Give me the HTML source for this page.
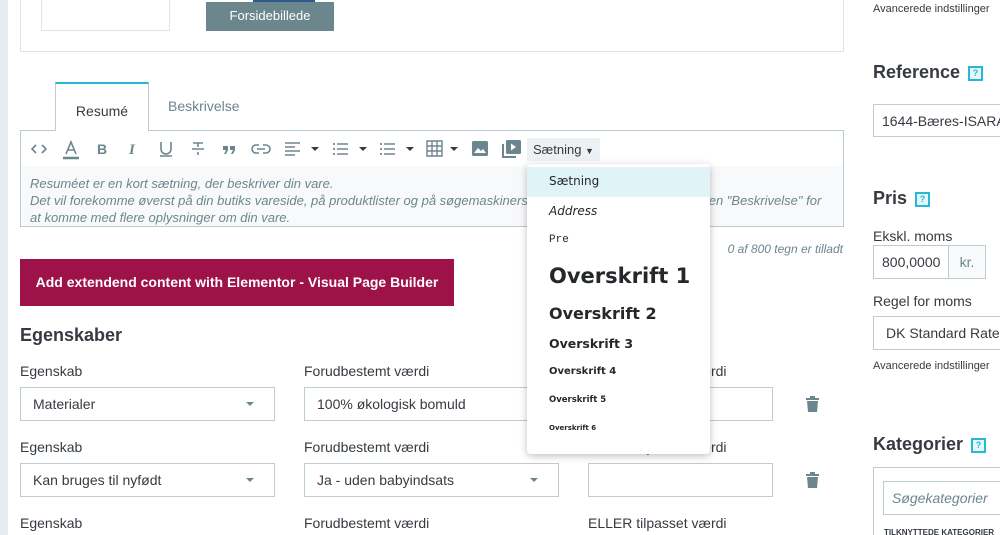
<!DOCTYPE html>
<html><head><meta charset="utf-8"><style>
*{box-sizing:border-box;margin:0;padding:0}
html,body{width:1000px;height:535px;overflow:hidden}
body{background:#fff;font-family:"Liberation Sans",sans-serif;color:#363a41;position:relative}
.a{position:absolute}
.lbl{font-size:14px;color:#363a41}
.inp{position:absolute;border:1px solid #bbcdd2;background:#fff;font-size:14px;padding-left:12px;display:flex;align-items:center;white-space:nowrap;overflow:hidden}
.caret{position:absolute;width:0;height:0;border-left:4px solid transparent;border-right:4px solid transparent;border-top:4px solid #6c868e}
.help{display:inline-block;width:15px;height:15px;border:2px solid #25b9d7;color:#25b9d7;font-size:9px;text-align:center;line-height:11px;background:#e6f7fa;vertical-align:middle;margin-left:8px;font-weight:bold}
.ic{position:absolute;top:140px}
.dd div{position:absolute;left:22px;color:#25282b;font-weight:bold}
</style></head><body>
<div class="a" style="left:0;top:0;width:8px;height:535px;background:#e9ecef"></div>
<div class="a" style="left:20px;top:-2px;width:824px;height:54px;border:1px solid #dbe6e9"></div>
<div class="a" style="left:41px;top:-2px;width:129px;height:33px;border:1px solid #dbe6e9"></div>
<div class="a" style="left:253px;top:0;width:62px;height:3px;background:#2d5a8a"></div>
<div class="a" style="left:206px;top:2px;width:128px;height:29px;background:#6c868e;color:#fff;font-size:13px;text-align:center;line-height:28px">Forsidebillede</div>
<div class="a" style="left:55px;top:82px;width:94px;height:49px;border:1px solid #bbcdd2;border-top:2px solid #25b9d7;border-bottom:none;background:#fff;z-index:2;font-size:14px;text-align:center;line-height:54px">Resumé</div>
<div class="a" style="left:168px;top:98px;font-size:14px;color:#6c868e">Beskrivelse</div>
<div class="a" style="left:20px;top:130px;width:824px;height:97px;border:1px solid #bbcdd2;background:#fff"></div>
<div class="a" style="left:21px;top:166px;width:822px;height:60px;background:#f8f9fa;font-style:italic;font-size:13px;color:#6c868e;padding:9px 0 0 9px;line-height:17px;white-space:nowrap;overflow:hidden">Resuméet er en kort sætning, der beskriver din vare.<br>Det vil forekomme øverst på din butiks vareside, på produktlister og på søgemaskiners resultatsider. Du kan bruge fanen "Beskrivelse" for<br>at komme med flere oplysninger om din vare.</div>
<svg class="ic" style="left:30px" width="18" height="18" viewBox="0 0 18 18" fill="none" stroke="#6c868e" stroke-width="1.6"><path d="M6 5L2 9l4 4M12 5l4 4-4 4"/></svg>
<svg class="ic" style="left:62px" width="18" height="20" viewBox="0 0 18 20" fill="none" stroke="#6c868e" stroke-width="1.6"><path d="M4 14L9 2l5 12M6 10h6"/><path d="M1 18h16" stroke-width="2.5"/></svg>
<svg class="ic" style="left:96px" width="14" height="18" viewBox="0 0 14 18"><text x="1" y="14" font-family="Liberation Sans" font-weight="bold" font-size="14" fill="#6c868e">B</text></svg>
<svg class="ic" style="left:127px" width="14" height="18" viewBox="0 0 14 18"><text x="2" y="14" font-family="Liberation Serif" font-style="italic" font-weight="bold" font-size="15" fill="#6c868e">I</text></svg>
<svg class="ic" style="left:158px" width="16" height="18" viewBox="0 0 16 18" fill="none" stroke="#6c868e" stroke-width="1.6"><path d="M3 2v7a5 5 0 0010 0V2M2 16h12"/></svg>
<svg class="ic" style="left:190px" width="16" height="18" viewBox="0 0 16 18" fill="none" stroke="#6c868e" stroke-width="1.6"><path d="M2 9h12M3 3h10M8 3v4M8 12v3"/></svg>
<svg class="ic" style="left:222px" width="14" height="18" viewBox="0 0 14 18" fill="#6c868e"><path d="M1 6h5v4l-2 4H2l2-4H1zM8 6h5v4l-2 4H9l2-4H8z"/></svg>
<svg class="ic" style="left:251px" width="20" height="18" viewBox="0 0 20 18" fill="none" stroke="#6c868e" stroke-width="1.6"><path d="M8 5H5a4 4 0 000 8h3M12 5h3a4 4 0 010 8h-3M6 9h8"/></svg>
<svg class="ic" style="left:284px" width="36" height="18" viewBox="0 0 36 18"><path d="M1 3h15M1 7h10M1 11h15M1 15h10" stroke="#6c868e" stroke-width="1.5"/><path d="M27 7h8l-4 4z" fill="#363a41"/></svg>
<svg class="ic" style="left:332px" width="36" height="18" viewBox="0 0 36 18"><path d="M5 4h11M5 9h11M5 14h11" stroke="#6c868e" stroke-width="1.5"/><path d="M1 4h2M1 9h2M1 14h2" stroke="#6c868e" stroke-width="1.8"/><path d="M27 7h8l-4 4z" fill="#363a41"/></svg>
<svg class="ic" style="left:379px" width="36" height="18" viewBox="0 0 36 18"><path d="M5 4h11M5 9h11M5 14h11" stroke="#6c868e" stroke-width="1.5"/><path d="M1 4h2M1 9h2M1 14h2" stroke="#6c868e" stroke-width="1.8"/><path d="M27 7h8l-4 4z" fill="#363a41"/></svg>
<svg class="ic" style="left:426px" width="36" height="18" viewBox="0 0 36 18"><path d="M1 1h15v15H1zM1 6h15M1 11h15M6 1v15M11 1v15" fill="none" stroke="#6c868e" stroke-width="1.4"/><path d="M24 7h8l-4 4z" fill="#363a41"/></svg>
<svg class="ic" style="left:472px" width="16" height="16" viewBox="0 0 16 16"><rect x="0" y="1" width="16" height="15" rx="1.5" fill="#6c868e"/><path d="M2 13l4-5 3 3 2-2 3 4z" fill="#fff"/></svg>
<svg class="ic" style="left:502px" width="19" height="18" viewBox="0 0 19 18"><rect x="4" y="0" width="15" height="14" rx="1.5" fill="#6c868e"/><path d="M1 4v13h13" fill="none" stroke="#6c868e" stroke-width="2"/><path d="M9 3.5l5 3.5-5 3.5z" fill="#fff"/></svg>
<div class="a" style="left:527px;top:138px;width:73px;height:23px;background:#eef1f3;font-size:13px;padding:4px 0 0 6px">Sætning <span style="font-size:9px">▼</span></div>
<div class="a" style="right:157px;top:242px;font-size:12px;font-style:italic;color:#6c868e">0 af 800 tegn er tilladt</div>
<div class="a" style="left:20px;top:259px;width:434px;height:47px;background:#9d1249;color:#fff;font-weight:bold;font-size:14px;text-align:center;line-height:47px">Add extendend content with Elementor - Visual Page Builder</div>
<div class="a" style="left:20px;top:325px;font-size:18px;font-weight:bold">Egenskaber</div>
<div class="a lbl" style="left:20px;top:363px">Egenskab</div>
<div class="a lbl" style="left:304px;top:363px">Forudbestemt værdi</div>
<div class="a lbl" style="left:588px;top:363px">ELLER tilpasset værdi</div>
<div class="inp" style="left:20px;top:387px;width:255px;height:34px">Materialer</div><div class="caret" style="left:246px;top:402px"></div>
<div class="inp" style="left:304px;top:387px;width:255px;height:34px">100% økologisk bomuld</div>
<div class="inp" style="left:588px;top:387px;width:185px;height:34px"></div>
<svg class="a" style="left:806px;top:396px" width="13" height="16" viewBox="0 0 13 16" fill="#6c868e"><path d="M0 2h13v2H0zM4 0h5v2H4zM1 5h11l-1 11H2z"/></svg>
<div class="a lbl" style="left:20px;top:439px">Egenskab</div>
<div class="a lbl" style="left:304px;top:439px">Forudbestemt værdi</div>
<div class="a lbl" style="left:588px;top:439px">ELLER tilpasset værdi</div>
<div class="inp" style="left:20px;top:463px;width:255px;height:34px">Kan bruges til nyfødt</div><div class="caret" style="left:246px;top:478px"></div>
<div class="inp" style="left:304px;top:463px;width:255px;height:34px">Ja - uden babyindsats</div><div class="caret" style="left:530px;top:478px"></div>
<div class="inp" style="left:588px;top:463px;width:185px;height:34px"></div>
<svg class="a" style="left:806px;top:472px" width="13" height="16" viewBox="0 0 13 16" fill="#6c868e"><path d="M0 2h13v2H0zM4 0h5v2H4zM1 5h11l-1 11H2z"/></svg>
<div class="a lbl" style="left:20px;top:515px">Egenskab</div>
<div class="a lbl" style="left:304px;top:515px">Forudbestemt værdi</div>
<div class="a lbl" style="left:588px;top:515px">ELLER tilpasset værdi</div>
<div class="a dd" style="left:527px;top:164px;width:183px;height:290px;background:#fff;box-shadow:0 2px 8px rgba(0,0,0,.25);border-radius:4px;font-family:'DejaVu Sans',sans-serif;z-index:5">
<div style="left:0;top:3px;width:183px;height:30px;background:#e0f4f7"></div>
<div style="top:10px;font-weight:normal;font-size:12px">Sætning</div>
<div style="top:40px;font-weight:normal;font-style:italic;font-size:12px">Address</div>
<div style="top:70px;font-family:'Liberation Mono',monospace;font-size:11px;font-weight:normal">Pre</div>
<div style="top:100px;font-size:21px">Overskrift 1</div>
<div style="top:140px;font-size:16px">Overskrift 2</div>
<div style="top:172px;font-size:12.5px">Overskrift 3</div>
<div style="top:202px;font-size:10px">Overskrift 4</div>
<div style="top:231px;font-size:8.5px">Overskrift 5</div>
<div style="top:260px;font-size:7px">Overskrift 6</div>
</div>
<div class="a" style="left:873px;top:3px;font-size:11px;color:#363a41">Avancerede indstillinger</div>
<div class="a" style="left:873px;top:62px;font-size:18px;font-weight:bold">Reference<span class="help">?</span></div>
<div class="inp" style="left:873px;top:104px;width:140px;height:33px;padding-left:8px">1644-Bæres-ISARA</div>
<div class="a" style="left:873px;top:188px;font-size:18px;font-weight:bold">Pris<span class="help">?</span></div>
<div class="a lbl" style="left:873px;top:228px">Ekskl. moms</div>
<div class="inp" style="left:873px;top:245px;width:113px;height:34px;padding-left:8px">800,0000</div>
<div class="a" style="left:948px;top:246px;width:37px;height:32px;border-left:1px solid #bbcdd2;background:#f8fafb;color:#6c868e;font-size:14px;line-height:32px;text-align:center">kr.</div>
<div class="a lbl" style="left:873px;top:293px">Regel for moms</div>
<div class="inp" style="left:873px;top:316px;width:140px;height:34px">DK Standard Rate</div>
<div class="a" style="left:873px;top:360px;font-size:11px">Avancerede indstillinger</div>
<div class="a" style="left:873px;top:434px;font-size:18px;font-weight:bold">Kategorier<span class="help">?</span></div>
<div class="a" style="left:873px;top:467px;width:140px;height:80px;border:1px solid #bbcdd2"></div>
<div class="inp" style="left:883px;top:481px;width:130px;height:34px;padding-left:8px;font-style:italic;color:#6c868e">Søgekategorier</div>
<div class="a" style="left:884px;top:528px;font-size:8px;font-weight:bold">TILKNYTTEDE KATEGORIER</div>
</body></html>
